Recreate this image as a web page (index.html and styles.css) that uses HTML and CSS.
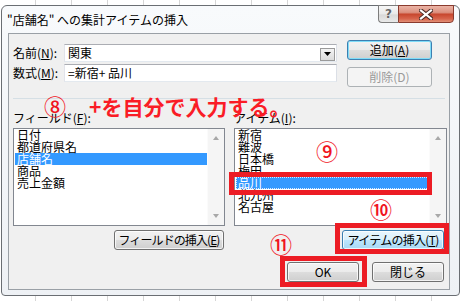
FILE: index.html
```html
<!DOCTYPE html>
<html lang="ja">
<head>
<meta charset="utf-8">
<link rel="stylesheet" href="styles.css">
</head>
<body>
<div class="window">
  <div class="titlebar">
    <div class="title">"店舗名" への集計アイテムの挿入</div>
    <div class="caps">
      <div class="cap help">?</div>
      <div class="cap close">
        <svg width="14" height="11" viewBox="0 0 14 11"><path d="M2 1.5 L12 9.5 M12 1.5 L2 9.5" stroke="#4a2a25" stroke-width="4.2" stroke-linecap="square"/><path d="M2 1.5 L12 9.5 M12 1.5 L2 9.5" stroke="#fff" stroke-width="2.2" stroke-linecap="square"/></svg>
      </div>
    </div>
  </div>
  <div class="client">
    <div class="top">
      <div class="fields">
        <div class="frow"><span class="lbl">名前(<u>N</u>):</span><div class="combo"><span>関東</span><span class="drop"><svg width="7" height="4" viewBox="0 0 7 4"><path d="M0 0H7L3.5 4Z" fill="#000"/></svg></span></div></div>
        <div class="frow"><span class="lbl">数式(<u>M</u>):</span><div class="text">=新宿+ 品川</div></div>
      </div>
      <div class="sidebtns">
        <div class="btn default">追加(<u>A</u>)</div>
        <div class="btn disabled">削除(D)</div>
      </div>
    </div>
    <div class="sep"></div>
    <div class="lists">
      <div class="col left">
        <div class="clbl">フィールド(<u>F</u>):</div>
        <div class="listbox">
          <ul class="items">
            <li>日付</li>
            <li>都道府県名</li>
            <li class="sel">店舗名</li>
            <li>商品</li>
            <li>売上金額</li>
          </ul>
          <div class="scroll"><span class="arrow up"></span><span class="arrow down"></span></div>
        </div>
        <div class="brow"><div class="btn fins">フィールドの挿入(<u>E</u>)</div></div>
      </div>
      <div class="col right">
        <div class="clbl">アイテム(<u>I</u>):</div>
        <div class="listbox">
          <ul class="items">
            <li>新宿</li>
            <li>難波</li>
            <li>日本橋</li>
            <li>梅田</li>
            <li class="sel focus">品川</li>
            <li>北九州</li>
            <li>名古屋</li>
          </ul>
          <div class="scroll"><span class="arrow up"></span><span class="arrow down"></span></div>
        </div>
        <div class="brow"><div class="btn hot iins">アイテムの挿入(<u>T</u>)</div></div>
      </div>
    </div>
    <div class="bottom">
      <div class="btn okb">OK</div>
      <div class="btn closeb">閉じる</div>
    </div>

    <span class="num n8">⑧</span>
    <span class="note">+を自分で入力する。</span>
    <span class="num n9">⑨</span>
    <span class="num n10">⑩</span>
    <span class="num n11">⑪</span>
    <div class="rbox r1"></div>
    <div class="rbox r2"></div>
    <div class="rbox r3"></div>
  </div>
</div>
</body>
</html>
```
FILE: styles.css
```css
* { box-sizing: border-box; margin: 0; padding: 0; }
html, body { width: 461px; height: 301px; overflow: hidden; }
body {
  background-color: #fff;
  background-image: repeating-linear-gradient(to right, transparent 0 35px, #d6d6d6 35px 36px);
  background-size: 72px 100%;
  font-family: "Noto Sans CJK JP", sans-serif;
  font-size: 12px;
  color: #000;
  padding: 5px 0 0 1px;
}
u { text-decoration: underline; text-underline-offset: 1px; }

.window {
  width: 459px;
  height: 291px;
  border: 1px solid #6a6e73;
  border-radius: 6px 6px 4px 4px;
  background: linear-gradient(#f8fafc, #eef1f5);
  display: flex;
  flex-direction: column;
}
.titlebar {
  height: 27px;
  display: flex;
  align-items: center;
  padding: 0 5px 0 5px;
}
.title { flex: 1; line-height: 14px; font-size: 12px; }
.caps { display: flex; align-self: flex-start; margin-top: -1px; height: 18px; }
.cap { height: 18px; border: 1px solid #7d7d7d; display: flex; align-items: center; justify-content: center; }
.help {
  width: 20px;
  border-right: none;
  border-radius: 0 0 0 4px;
  background: linear-gradient(#f7f7f7, #e9e9e9 50%, #d9d9d9 55%, #e9e9e9);
  color: #666;
  font-family: "DejaVu Sans", sans-serif;
  font-size: 12px;
  font-weight: bold;
  text-shadow: 0 0 1px #fff;
}
.close {
  width: 56px;
  border-color: #8a3a2e;
  border-radius: 0 0 4px 0;
  background: linear-gradient(#ebb4a6, #dc9180 40%, #c8482f 52%, #d7644c 80%, #e29077);
}

.client {
  margin: 0 9px 0 6px;
  height: 257px;
  border: 1px solid #9aa0a6;
  background: #f0f0f0;
  position: relative;
}
.top { display: flex; padding: 6px 0 0 4px; }
.fields { margin-top: 4px; display: flex; flex-direction: column; gap: 2px; }
.frow { display: flex; align-items: center; height: 18px; }
.lbl { width: 51px; line-height: 14px; }
.combo, .text {
  width: 273px;
  height: 18px;
  border: 1px solid #abadb3;
  border-color: #abadb3 #dbdfe6 #e3e9ef #e2e3ea;
  background: #fff;
  padding-left: 3px;
  display: flex;
  align-items: center;
  line-height: 14px;
}
.drop {
  margin-left: auto;
  margin-right: 1px;
  margin-top: 2px;
  width: 15px;
  height: 13px;
  border: 1px solid #9a9a9a;
  background: linear-gradient(#f4f4f4, #dcdcdc);
  display: flex;
  align-items: center;
  justify-content: center;
}
.sidebtns { margin-left: 10px; display: flex; flex-direction: column; gap: 7px; }
.btn {
  height: 20px;
  border: 1px solid #707070;
  border-radius: 3px;
  background: linear-gradient(#f2f2f2 0, #ebebeb 50%, #dddddd 50%, #cfcfcf 100%);
  box-shadow: inset 0 0 0 1px rgba(255, 255, 255, .75);
  display: flex;
  align-items: center;
  justify-content: center;
  line-height: 14px;
  white-space: nowrap;
}
.sidebtns .btn { width: 85px; }
.default {
  border-color: #3c7fb1;
  box-shadow: inset 0 0 0 1px #7fdcf8;
}
.disabled {
  border-color: #adb2b5;
  background: #f4f4f4;
  color: #9a9a9a;
  box-shadow: none;
}
.hot {
  border-color: #3c7fb1;
  background: linear-gradient(#eaf6fd 0, #d9f0fc 50%, #bee6fd 50%, #a7d9f5 100%);
}

.sep { margin: 11px 0 0 4px; width: 432px; height: 1px; background: #d5dfe5; }
.lists { display: flex; gap: 9px; padding-left: 4px; margin-top: 13px; }
.col { display: flex; flex-direction: column; }
.col.left { width: 212px; }
.col.right { width: 213px; }
.clbl { height: 12px; line-height: 12px; margin-bottom: 4px; }
.listbox {
  height: 98px;
  border: 1px solid #828790;
  background: #fff;
  display: flex;
}
.items { flex: 1; list-style: none; padding: 0 0 0 1px; }
.items li { height: 12px; line-height: 12px; padding-left: 2px; white-space: nowrap; }
.items li.sel { background: #3399ff; color: #fff; }
.items li.focus { outline: 1px dotted rgba(255, 255, 255, .8); outline-offset: -1px; }
.scroll {
  width: 17px;
  background: #f5f5f5;
  border-left: 1px solid #fbfbfb;
  display: flex;
  flex-direction: column;
  justify-content: space-between;
  align-items: center;
  padding: 7px 0;
}
.arrow { width: 0; height: 0; border-left: 3.5px solid transparent; border-right: 3.5px solid transparent; }
.arrow.up { border-bottom: 4px solid #a8a8a8; }
.arrow.down { border-top: 4px solid #a8a8a8; }
.brow { display: flex; justify-content: flex-end; margin-top: 4px; }
.fins { width: 110px; margin-right: 1px; letter-spacing: -0.9px; }
.iins { width: 102px; margin-right: 3px; letter-spacing: -0.7px; }
.bottom { display: flex; justify-content: flex-end; gap: 13px; margin-top: 12px; padding-right: 5px; }
.okb, .closeb { width: 72px; }

.num {
  position: absolute;
  color: #f0141e;
  font-size: 22px;
  font-weight: 500;
  line-height: 22px;
}
.n8 { left: 35px; top: 60px; }
.n9 { left: 307px; top: 105px; }
.n10 { left: 361px; top: 163px; }
.n11 { left: 261px; top: 198px; }
.note {
  position: absolute;
  left: 80px;
  top: 61px;
  color: #fa1c26;
  font-size: 21px;
  font-weight: bold;
  line-height: 22px;
  white-space: nowrap;
}
.rbox { position: absolute; border: 5px solid #ec1c24; }
.r1 { left: 220px; top: 138px; width: 203px; height: 23px; }
.r2 { left: 326px; top: 189px; width: 114px; height: 31px; }
.r3 { left: 271px; top: 222px; width: 87px; height: 31px; }
```
